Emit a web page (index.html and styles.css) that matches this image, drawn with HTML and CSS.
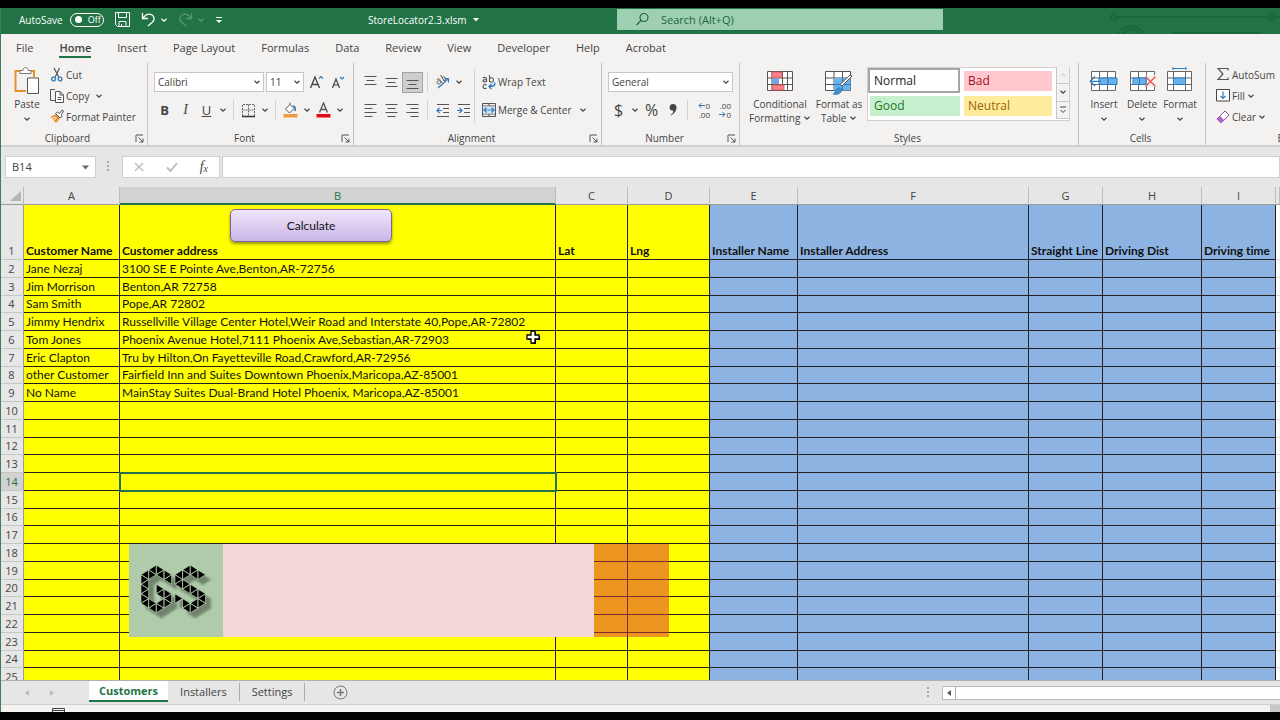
FILE: index.html
```html
<!DOCTYPE html>
<html lang="en">
<head>
<meta charset="utf-8">
<title>StoreLocator2.3.xlsm</title>
<link rel="stylesheet" href="styles.css">
</head>
<body>
<svg class="defs" aria-hidden="true">
  <symbol id="chev" viewBox="0 0 8 8"><path d="M1.5 2.8 4 5.2 6.500 2.800" fill="none" stroke="currentColor" stroke-width="1.200"/></symbol>
  <symbol id="launch" viewBox="0 0 9 9"><path d="M1 8V1h7M3.500 3.500 8 8M8 4.500V8H4.500" fill="none" stroke="#555" stroke-width="1"/></symbol>
</svg>
<div class="app">
  <header class="titlebar">
    <div class="quick">
      <span>AutoSave</span>
      <button class="toggle" aria-label="AutoSave off"><i></i>Off</button>
      <button class="qa" aria-label="Save"><svg width="15" height="15" viewBox="0 0 15 15" fill="none" stroke="#fff"><path d="M.5.5h14v14H2.500l-2-2zM3.500.5v5h8v-5M4 14.500v-5h7v5M6.500 12v2"/></svg></button>
      <button class="qa" aria-label="Undo"><svg width="15" height="15" viewBox="0 0 15 15" fill="none" stroke="#fff" stroke-width="1.300"><path d="M1.500 1v5.500H7M1.800 6.200C5 2 8.500 1.500 11 3c3 2 2.500 5 .5 7L7 14"/></svg></button>
      <svg class="chev" width="8" height="8"><use href="#chev"/></svg>
      <button class="qa faded" aria-label="Redo"><svg width="15" height="15" viewBox="0 0 15 15" fill="none" stroke="#fff" stroke-width="1.300"><path d="M13.500 1v5.500H8M13.200 6.200C10 2 6.500 1.500 4 3c-3 2-2.500 5-.5 7L8 14"/></svg></button>
      <svg class="chev faded" width="8" height="8"><use href="#chev"/></svg>
      <button class="qa more" aria-label="Customize toolbar"><svg width="8" height="8" viewBox="0 0 8 8"><path d="M1 1.500h6" stroke="#fff"/><path d="M1 4h6L4 7z" fill="#fff"/></svg></button>
    </div>
    <div class="file">StoreLocator2.3.xlsm <svg width="6" height="4" viewBox="0 0 6 4"><path d="M0 0h6L3 3.500z" fill="#fff"/></svg></div>
    <label class="search"><svg width="15" height="15" viewBox="0 0 15 15" fill="none" stroke="#1c6640" stroke-width="1.200"><circle cx="9" cy="5.500" r="4"/><path d="M6 8.500 1.500 13"/></svg><input type="search" placeholder="Search (Alt+Q)" aria-label="Search"></label>
    <svg class="decor" width="170" height="26" viewBox="0 0 170 26" fill="none" stroke="#1a5e38" stroke-width="2"><path d="M5 9h165M62 25h90"/><circle cx="4" cy="9" r="3"/><circle cx="161" cy="9" r="3"/><path d="M8 26c4-10 22-10 26 0M13 26c3-6 13-6 16 0"/></svg>
  </header>
  <nav class="tabs">
    <button>File</button><button class="on">Home</button><button>Insert</button><button>Page Layout</button><button>Formulas</button><button>Data</button><button>Review</button><button>View</button><button>Developer</button><button>Help</button><button>Acrobat</button>
  </nav>
  <div class="ribbon">
    <section class="group clipboard">
      <div class="body">
        <button class="big"><svg width="26" height="28" viewBox="0 0 26 28" fill="none"><path d="M6 4H1.500v20H12M16 4h4v6" stroke="#e8922e" stroke-width="2"/><path d="M6 6.500V3.500h3c0-4 5-4 5 0h3v3z" fill="#fff" stroke="#777"/><path d="M13.500 11h11v15.500h-11z" fill="#fff" stroke="#555"/></svg><span>Paste</span><svg class="chev" width="8" height="8"><use href="#chev"/></svg></button>
        <div class="list">
          <button><svg width="14" height="15" viewBox="0 0 14 15" fill="none"><path d="M4 1l5 9.500M9.500 1 5 10.500" stroke="#555" stroke-width="1.200"/><circle cx="3.500" cy="12" r="1.900" stroke="#2b7cc4" stroke-width="1.300"/><circle cx="10" cy="12" r="1.900" stroke="#2b7cc4" stroke-width="1.300"/></svg>Cut</button>
          <button><svg width="14" height="15" viewBox="0 0 14 15" fill="none" stroke="#555"><path d="M5 12.500H.5V1.500H5"/><path d="M5.500 3.500H10l3.500 3.500v7.500h-8zM10 3.500V7h3.500M7.500 9.500h4M7.500 11.500h4" fill="#fff"/></svg>Copy<svg class="chev" width="8" height="8"><use href="#chev"/></svg></button>
          <button><svg width="14" height="15" viewBox="0 0 14 15"><path d="M.5 8 6 5l4 4.500L6 14z" fill="#e8922e"/><path d="M2 9.500 5.500 8M3.500 11.500 6.500 9" stroke="#fff"/><path d="m5.500 4.500 2-1.500 2 1.500L12 1l1.500 1-2 3.500.5 2-2 1.500z" fill="#fff" stroke="#555"/></svg>Format Painter</button>
        </div>
      </div>
      <footer><span>Clipboard</span><svg width="9" height="9"><use href="#launch"/></svg></footer>
    </section>
    <section class="group font">
      <div class="body rows">
        <div class="row inset">
          <span class="combo face"><select aria-label="Font"><option>Calibri</option></select><svg width="8" height="8"><use href="#chev"/></svg></span>
          <span class="combo size"><select aria-label="Font size"><option>11</option></select><svg width="8" height="8"><use href="#chev"/></svg></span>
          <button class="tool" aria-label="Grow font"><svg width="16" height="15" viewBox="0 0 16 15" fill="none"><path d="M1.500 13 6 2l4.500 11M3 9.500h6" stroke="#444" stroke-width="1.300"/><path d="m10 3.500 2-2 2 2" stroke="#2b7cc4" stroke-width="1.200"/></svg></button>
          <button class="tool" aria-label="Shrink font"><svg width="16" height="15" viewBox="0 0 16 15" fill="none"><path d="M2.500 13 6 4l3.500 9M4 10h4" stroke="#444" stroke-width="1.200"/><path d="m10 2 2 2 2-2" stroke="#2b7cc4" stroke-width="1.200"/></svg></button>
        </div>
        <div class="row">
          <button class="tool"><b>B</b></button><button class="tool"><i class="it">I</i></button><button class="tool"><u>U</u></button><svg class="chev" width="12" height="8"><use href="#chev"/></svg><hr>
          <button class="tool" aria-label="Borders"><svg width="15" height="15" viewBox="0 0 15 15" fill="none" stroke="#666"><path d="M1.500 13V1.500h12V13M7.500 1.500v11M1.500 7h12" stroke-dasharray="2 1"/><path d="M1 13.500h13" stroke="#333" stroke-width="1.500"/></svg></button><svg class="chev" width="12" height="8"><use href="#chev"/></svg><hr>
          <button class="tool" aria-label="Fill color"><svg width="15" height="16" viewBox="0 0 15 16" fill="none"><path d="M2.500 7 7 2.500 11 6.500 6.500 11zM7 2.500V.5" stroke="#555" fill="#fff"/><path d="M10 4c2 0 2.500 2 2 5" stroke="#2b7cc4" stroke-width="1.600"/><path d="M.5 12h14v3.500H.5z" fill="#ed9a45"/></svg></button><svg class="chev" width="12" height="8"><use href="#chev"/></svg>
          <button class="tool" aria-label="Font color"><svg width="15" height="16" viewBox="0 0 15 16" fill="none"><path d="M3.500 10.500 7.500 1l4 9.500M5 7.500h5" stroke="#555" stroke-width="1.300"/><path d="M.5 12h14v3.500H.5z" fill="#e00b17"/></svg></button><svg class="chev" width="12" height="8"><use href="#chev"/></svg>
        </div>
      </div>
      <footer><span>Font</span><svg width="9" height="9"><use href="#launch"/></svg></footer>
    </section>
    <section class="group align">
      <div class="body">
        <div class="rows">
          <div class="row">
            <button class="tool" aria-label="Top align"><svg width="13" height="13" viewBox="0 0 13 13" stroke="#555"><path d="M.5 .5h12M2.500 4.500h8M.5 8.500h12"/></svg></button>
            <button class="tool" aria-label="Middle align"><svg width="13" height="13" viewBox="0 0 13 13" stroke="#555"><path d="M.5 2.500h12M2.500 6.500h8M.5 10.500h12"/></svg></button>
            <button class="tool on" aria-label="Bottom align"><svg width="13" height="13" viewBox="0 0 13 13" stroke="#555"><path d="M.5 4.500h12M2.500 8.500h8M.5 12.500h12"/></svg></button><hr>
            <button class="tool" aria-label="Orientation"><svg width="16" height="15" viewBox="0 0 16 15" fill="none"><path d="M3 13 13.500 3.500M9.500 3.500h4v4" stroke="#2b7cc4" stroke-width="1.200"/><path d="M2 5c1-2 3-1 3.500.5L7 8M5 6C3 5 1 7 2.500 8.500S6 8 5.500 6.500M5.500 0 9 5.500M7 3c1.500-2 4-1 3.500 1S8.500 6 8 5" stroke="#555"/></svg></button><svg class="chev" width="12" height="8"><use href="#chev"/></svg>
          </div>
          <div class="row">
            <button class="tool" aria-label="Align left"><svg width="13" height="13" viewBox="0 0 13 13" stroke="#555"><path d="M.5.5h12M.5 4.500h8M.5 8.500h12M.5 12.500h8"/></svg></button>
            <button class="tool" aria-label="Center"><svg width="13" height="13" viewBox="0 0 13 13" stroke="#555"><path d="M.5.5h12M2.500 4.500h8M.5 8.500h12M2.500 12.500h8"/></svg></button>
            <button class="tool" aria-label="Align right"><svg width="13" height="13" viewBox="0 0 13 13" stroke="#555"><path d="M.5.5h12M4.500 4.500h8M.5 8.500h12M4.500 12.500h8"/></svg></button><hr>
            <button class="tool" aria-label="Decrease indent"><svg width="13" height="13" viewBox="0 0 13 13" fill="none" stroke="#555"><path d="M1 .5h12M7 4.500h6M7 8.500h6M1 12.500h12"/><path d="M6 6.500H1M3.500 4 1 6.500 3.500 9" stroke="#2b7cc4" stroke-width="1.200"/></svg></button>
            <button class="tool" aria-label="Increase indent"><svg width="13" height="13" viewBox="0 0 13 13" fill="none" stroke="#555"><path d="M1 .5h12M7 4.500h6M7 8.500h6M1 12.500h12"/><path d="M0 6.500h5M2.500 4 5 6.500 2.500 9" stroke="#2b7cc4" stroke-width="1.200"/></svg></button>
          </div>
        </div>
        <hr class="tall">
        <div class="rows">
          <button class="text"><svg width="14" height="15" viewBox="0 0 14 15" fill="none" stroke="#555" stroke-width="1.100"><path d="M1 3c1-1 3.500-1 3.500 1v3M4.500 4.500C2 4.500 1 5 1 6s2.500 1.500 3.500 0M7.500 0v7M7.500 4c1-2 4-1.500 4 1s-3 3-4 1M4.500 10C2.500 8.500 1 10 1 11.500s1.500 3 3.500 1.500"/><path d="M12.500 7.500c1 3-1 4-5 4M9.500 9 7 11.500 9.500 14" stroke="#2b7cc4" stroke-width="1.400"/></svg>Wrap Text</button>
          <button class="text"><svg width="14" height="14" viewBox="0 0 14 14" fill="none"><path d="M.5.500h13v13H.5zM.5 3h13M.5 11h13M7 .5V3M7 11v2.500" stroke="#555"/><path d="M1 3.500h12v7H1z" fill="#d4e8f8"/><path d="M2 7h10M4.500 4.500 2 7l2.500 2.500M9.500 4.500 12 7 9.500 9.500" stroke="#2b7cc4" stroke-width="1.200"/></svg>Merge &amp; Center<svg class="chev" width="8" height="8"><use href="#chev"/></svg></button>
        </div>
      </div>
      <footer><span>Alignment</span><svg width="9" height="9"><use href="#launch"/></svg></footer>
    </section>
    <section class="group number">
      <div class="body rows">
        <div class="row inset"><span class="combo wide"><select aria-label="Number format"><option>General</option></select><svg width="8" height="8"><use href="#chev"/></svg></span></div>
        <div class="row">
          <button class="tool sym">$</button><svg class="chev" width="12" height="8"><use href="#chev"/></svg><button class="tool sym">%</button><button class="tool" aria-label="Comma style"><svg width="8" height="12" viewBox="0 0 8 12"><path d="M4 0c5 0 5 8-2 11.500L1.500 11C4 9.500 4.500 8 4 6.500-.5 7-.5 0 4 0z" fill="#444"/></svg></button><hr>
          <button class="tool dec" aria-label="Increase decimal"><span><svg width="7" height="7" viewBox="0 0 7 7" fill="none" stroke="#2b7cc4"><path d="M7 3.500H1M3.500 1 1 3.500 3.500 6"/></svg>0</span><span>.00</span></button>
          <button class="tool dec" aria-label="Decrease decimal"><span>.00</span><span><svg width="7" height="7" viewBox="0 0 7 7" fill="none" stroke="#2b7cc4"><path d="M0 3.500h6M3.500 1 6 3.500 3.500 6"/></svg>0</span></button>
        </div>
      </div>
      <footer><span>Number</span><svg width="9" height="9"><use href="#launch"/></svg></footer>
    </section>
    <section class="group styles">
      <div class="body">
        <button class="big cond"><svg width="26" height="28" viewBox="0 0 26 28"><path d="M.5 4.500h25v19H.5zM.5 11h25M.5 17.500h25M5 4.500v19M15.500 4.500v19M20.500 4.500v19" fill="#fff" stroke="#555"/><path d="M5 5h10v5.500H5zM5 18h12v5H5z" fill="#fb8188" stroke="#d8505a" stroke-width=".8"/><path d="M5 11.500h7v5.500H5z" fill="#6fa8e0"/></svg><span>Conditional<br>Formatting <svg class="chev" width="8" height="8"><use href="#chev"/></svg></span></button>
        <button class="big fmt"><svg width="28" height="28" viewBox="0 0 28 28"><path d="M.5 4.500h25v19H.5zM.5 11h25M.5 17.500h25M9 4.500v19M17.500 4.500v19" fill="#fff" stroke="#555"/><path d="M9 11h16.500v12.500H9z" fill="#69b2ea"/><path d="M9 17.500h16M17.500 11v12" stroke="#2b7cc4"/><path d="M27 9 17 19l-2-1.500L25 8z" fill="#fff" stroke="#555"/><path d="M8 27c2-1 2-3 3.500-5 2-2.500 6-1 5 2-1 3-5 4-8.500 3z" fill="#3b8fd6" stroke="#2b6ca8" stroke-width=".6"/></svg><span>Format as<br>Table <svg class="chev" width="8" height="8"><use href="#chev"/></svg></span></button>
        <div class="gallery">
          <button class="normal">Normal</button><button class="bad">Bad</button><button class="good">Good</button><button class="neutral">Neutral</button>
          <div class="scroll"><button class="dim" aria-label="Up"><svg width="8" height="8" viewBox="0 0 8 8"><path d="M1.500 5 4 2.800 6.500 5" fill="none" stroke="currentColor"/></svg></button><button aria-label="Down"><svg width="8" height="8"><use href="#chev"/></svg></button><button aria-label="More styles"><svg width="8" height="8" viewBox="0 0 8 8"><path d="M1 1h6M1.500 4 4 6.500 6.500 4" fill="none" stroke="currentColor"/></svg></button></div>
        </div>
      </div>
      <footer><span>Styles</span></footer>
    </section>
    <section class="group cells">
      <div class="body">
        <button class="big"><svg width="30" height="28" viewBox="0 0 30 28"><path d="M2.500 4.500h24v19h-24zM2.500 11h24M2.500 17.500h24M10.500 4.500v19M18.500 4.500v19" fill="#fff" stroke="#666"/><path d="M10 11h18v6.500H10z" fill="#69b2ea" stroke="#2b7cc4"/><path d="M19 11v6M12 14.300H1M6 9.500 1.200 14.300 6 19" stroke="#2b7cc4" stroke-width="1.200" fill="none"/></svg><span>Insert</span><svg class="chev" width="8" height="8"><use href="#chev"/></svg></button>
        <button class="big"><svg width="27" height="28" viewBox="0 0 27 28"><path d="M1.500 4.500h24v19h-24zM1.500 11h24M1.500 17.500h24M9.500 4.500v19M17.500 4.500v19" fill="#fff" stroke="#666"/><path d="M17.500 8h9v12h-9z" fill="#f3f2f1"/><path d="M4 11h13v6.500H4z" fill="#69b2ea" stroke="#2b7cc4"/><path d="M10.500 11v6" stroke="#2b7cc4"/><path d="m16.500 9.500 10 10M26.500 9.500l-10 10" stroke="#f0575c" stroke-width="1.500"/></svg><span>Delete</span><svg class="chev" width="8" height="8"><use href="#chev"/></svg></button>
        <button class="big"><svg width="26" height="28" viewBox="0 0 26 28"><path d="M.5 4.500h24v19H.5zM.5 11h24M.5 17.500h24M6.500 4.500v19M18.500 4.500v19" fill="#fff" stroke="#666"/><path d="M6.500 11h12v6.500h-12z" fill="#69b2ea" stroke="#2b7cc4"/><path d="M6 1.500h13M6 0v3M19 0v3" stroke="#2b7cc4"/></svg><span>Format</span><svg class="chev" width="8" height="8"><use href="#chev"/></svg></button>
      </div>
      <footer><span>Cells</span></footer>
    </section>
    <section class="group editing">
      <div class="body"><div class="list">
        <button><svg width="14" height="15" viewBox="0 0 14 15" fill="none" stroke="#555" stroke-width="1.200"><path d="M12 3.500V1.500H2l5 5.500-5 5.500h10v-2"/></svg>AutoSum</button>
        <button><svg width="14" height="13" viewBox="0 0 14 13" fill="none"><path d="M.5.5h13v11.500H.5z" fill="#fff" stroke="#444"/><path d="M7 2.500v7M4.500 7 7 9.500 9.500 7" stroke="#2b7cc4" stroke-width="1.200"/></svg>Fill<svg class="chev" width="8" height="8"><use href="#chev"/></svg></button>
        <button><svg width="14" height="14" viewBox="0 0 14 14"><path d="M1 9 9 1l4 4-8 8z" fill="#fff" stroke="#8b4fa8"/><path d="m1 9 3-3 4 4-3 3z" fill="#b565c9"/></svg>Clear<svg class="chev" width="8" height="8"><use href="#chev"/></svg></button>
      </div></div>
      <footer><span>Editing</span></footer>
    </section>
  </div>
  <div class="formulabar">
    <label class="namebox"><input value="B14" aria-label="Name box"><svg width="7" height="5" viewBox="0 0 7 5"><path d="M0 .5h7L3.500 4.500z" fill="#666"/></svg></label>
    <svg width="3" height="12" viewBox="0 0 3 12" fill="#aaa"><path d="M0 0h2v2H0zM0 4h2v2H0zM0 8h2v2H0z"/></svg>
    <div class="fx">
      <button aria-label="Cancel"><svg width="10" height="10" viewBox="0 0 10 10"><path d="m1 1 8 8M9 1 1 9" stroke="#bbb" stroke-width="1.300"/></svg></button>
      <button aria-label="Enter"><svg width="12" height="10" viewBox="0 0 12 10"><path d="m1 5.500 3.500 3.500L11 1" fill="none" stroke="#bbb" stroke-width="1.800"/></svg></button>
      <button class="fn" aria-label="Insert function">f<sub>x</sub></button>
    </div>
    <input class="formula" aria-label="Formula">
  </div>
  <main class="sheet">
    <table>
      <colgroup><col class="rh"><col class="a"><col class="b"><col class="c"><col class="d"><col class="e"><col class="f"><col class="g"><col class="h"><col class="i"><col></colgroup>
      <thead><tr><th class="corner"><svg width="11" height="10" viewBox="0 0 11 10"><path d="M11 0v10H0z" fill="#b5b5b5"/></svg></th><th>A</th><th class="sel">B</th><th>C</th><th>D</th><th>E</th><th>F</th><th>G</th><th>H</th><th>I</th><th></th></tr></thead>
      <tbody id="rows"></tbody>
    </table>
    <button class="calc">Calculate</button>
    <div class="banner">
      <div class="logo"><svg width="65" height="48" viewBox="0 0 68 50" aria-label="GS"><g stroke="#afcbaa" stroke-width=".7">
        <path transform="scale(8 5)" vector-effect="non-scaling-stroke" d="M0 2v2l1-1zM0 4v2l1-1zM0 6v2l1-1zM1 3v2l-1-1zM1 5v2l-1-1zM1 1v2l-1-1zM1 1v2l1-1zM2 0v2l-1-1zM2 0v2l1-1zM3 1v2l-1-1zM3 1v2l1-1zM4 2v2l-1-1zM1 7v2l-1-1zM1 7v2l1-1zM2 8v2l-1-1zM2 8v2l1-1zM3 7v2l-1-1zM3 7v2l1-1zM4 6v2l-1-1zM3 5v2l1-1zM3 5v2l-1-1zM2 4v2l1-1z"/>
        <path transform="translate(35.500 0) scale(8 5)" vector-effect="non-scaling-stroke" d="M3 1v2l1-1zM3 1v2l-1-1zM2 0v2l1-1zM2 0v2l-1-1zM1 1v2l1-1zM1 1v2l-1-1zM0 2v2l1-1zM1 3v2l-1-1zM1 3v2l1-1zM2 4v2l-1-1zM2 4v2l1-1zM3 5v2l-1-1zM3 5v2l1-1zM4 6v2l-1-1zM3 7v2l1-1zM3 7v2l-1-1zM2 8v2l1-1zM2 8v2l-1-1zM1 7v2l1-1zM0 6v2l1-1z"/>
      </g></svg></div>
      <div class="pink"></div><div class="orange"></div>
    </div>
    <svg class="cursor" width="15" height="15" viewBox="0 0 15 15"><path d="M6 2h4v4h4v4h-4v4H6v-4H2V6h4z" fill="#000"/><path d="M5 1h4v4h4v4H9v4H5V9H1V5h4z" fill="#fff" stroke="#000" stroke-width="1.300"/></svg>
  </main>
  <div class="sheetbar">
    <button class="nav" aria-label="Previous sheet"><svg width="4" height="6" viewBox="0 0 4 6"><path d="M4 0v6L0 3z" fill="#bbb"/></svg></button><button class="nav" aria-label="Next sheet"><svg width="4" height="6" viewBox="0 0 4 6"><path d="M0 0v6l4-3z" fill="#bbb"/></svg></button>
    <div class="sheets"><button class="on">Customers</button><button>Installers</button><button>Settings</button></div>
    <button class="add" aria-label="New sheet"><svg width="15" height="15" viewBox="0 0 15 15" fill="none" stroke="#777"><circle cx="7.500" cy="7.500" r="6.500"/><path d="M7.500 4v7M4 7.500h7" stroke-width="1.500"/></svg></button>
    <svg class="grip" width="3" height="12" viewBox="0 0 3 12" fill="#aaa"><path d="M0 0h2v2H0zM0 4h2v2H0zM0 8h2v2H0z"/></svg>
    <div class="hscroll"><button aria-label="Scroll left"><svg width="4" height="6" viewBox="0 0 4 6"><path d="M4 0v6L0 3z" fill="#555"/></svg></button></div>
  </div>
  <div class="status"><svg width="13" height="4" viewBox="0 0 13 4"><path d="M.5 4V.5h12V4M1 2.500h11" fill="none" stroke="#444"/></svg><span></span></div>
</div>
<script src="rows.js"></script>
</body>
</html>
```
FILE: rows.js
```js
const head = ["Customer Name", "Customer address", "Lat", "Lng", "Installer Name", "Installer Address", "Straight Line", "Driving Dist", "Driving time"];
const customers = [
  ["Jane Nezaj", "3100 SE E Pointe Ave,Benton,AR-72756"],
  ["Jim Morrison", "Benton,AR 72758"],
  ["Sam Smith", "Pope,AR 72802"],
  ["Jimmy Hendrix", "Russellville Village Center Hotel,Weir Road and Interstate 40,Pope,AR-72802"],
  ["Tom Jones", "Phoenix Avenue Hotel,7111 Phoenix Ave,Sebastian,AR-72903"],
  ["Eric Clapton", "Tru by Hilton,On Fayetteville Road,Crawford,AR-72956"],
  ["other Customer", "Fairfield Inn and Suites Downtown Phoenix,Maricopa,AZ-85001"],
  ["No Name", "MainStay Suites Dual-Brand Hotel Phoenix, Maricopa,AZ-85001"]
];
const body = document.getElementById("rows");
for (let n = 1; n <= 25; n++) {
  const data = n === 1 ? head : customers[n - 2] || [];
  const tr = body.insertRow();
  const th = document.createElement("th");
  th.textContent = n;
  tr.append(th);
  if (n === 14) th.className = "sel";
  for (let c = 0; c < 10; c++) {
    const td = tr.insertCell();
    td.textContent = data[c] || "";
    td.className = c < 4 ? "cust" : c < 9 ? "inst" : "";
    if (n === 14 && c === 1) td.classList.add("active");
  }
}
```
FILE: styles.css
```css
* { box-sizing: border-box; }
body { margin: 0; background: #000; font: 10px/16px "Open Sans", "Noto Sans", sans-serif; color: #444; }
button, input, select { font: inherit; color: inherit; border: 0; padding: 0; margin: 0; background: none; border-radius: 0; }
svg { flex: none; display: block; }
.defs { position: absolute; width: 0; height: 0; }
.app { height: 100vh; border: solid #000; border-width: 8px 0; display: flex; flex-direction: column; overflow: hidden; background: #e6e6e6; position: relative; }
.app::after { content: ""; position: absolute; left: 0; top: 0; bottom: 0; width: 1px; background: #3f7d5b; }
.app > * { flex: none; }

.titlebar { height: 26px; background: #217346; color: #fff; display: flex; align-items: center; position: relative; padding-bottom: 3px; }
.quick { display: flex; align-items: center; padding-left: 19px; width: 368px; }
.toggle { width: 34px; height: 14px; border: 1px solid #fff; border-radius: 7px; margin: 0 11px 0 7px; display: flex; align-items: center; gap: 6px; padding-left: 4px; font-size: 9px; line-height: 12px; }
.toggle i { width: 7px; height: 7px; border-radius: 50%; background: #fff; }
.qa { margin-right: 11px; }
.qa + .chev { margin: 0 10px 0 -7px; }
.faded { opacity: .25; }
.more { margin-left: 0; }
.file { display: flex; align-items: center; gap: 6px; width: 249px; }
.search { width: 326px; height: 21px; background: #9fcfb2; display: flex; align-items: center; padding-left: 18px; gap: 11px; font-size: 11px; }
.search input { width: 200px; color: #1c6640; outline: 0; }
.search input::placeholder { color: #1c6640; opacity: 1; }
.decor { position: absolute; right: 0; top: 0; opacity: .6; }

.tabs { height: 27px; background: #f3f2f1; display: flex; padding-left: 16px; gap: 26px; font-size: 11px; align-items: flex-start; }
.tabs button { height: 24px; border-bottom: 2px solid transparent; padding-top: 5px; }
.tabs .on { font-weight: 600; border-color: #217346; }

.ribbon { background: #f3f2f1; display: flex; height: 86px; border-bottom: 2px solid #d2d0ce; overflow: hidden; padding-top: 2px; }
.group { border-right: 1px solid #c6c4c2; display: flex; flex-direction: column; height: 82px; flex: none; }
.group .body { display: flex; height: 66px; flex: none; }
.group footer { display: flex; align-items: center; height: 18px; padding-right: 3px; flex: none; }
.group footer span { flex: 1; text-align: center; }
.clipboard { width: 148px; }
.font { width: 206px; }
.align { width: 248px; }
.number { width: 138px; }
.styles { flex: 1 0 339px; }
.cells { width: 127px; }
.editing { width: 178px; margin-right: -104px; border: 0; }
.big { display: flex; flex-direction: column; align-items: center; width: 38px; line-height: 14px; padding-top: 4px; }
.big span { padding-top: 2px; white-space: nowrap; }
.big > .chev { margin-top: 4px; }
.big span .chev { display: inline-block; }
.clipboard .body { padding-left: 8px; }
.list { display: flex; flex-direction: column; padding: 1px 0 0 4px; }
.list button { height: 21px; display: flex; align-items: center; gap: 2px; white-space: nowrap; }
.list .chev { margin-left: 4px; }
.rows { flex-direction: column; padding-top: 5px; }
.font .rows, .align .body, .number .rows, .font .body, .number .body { padding-left: 6px; }
.align .rows { display: flex; padding-left: 0; }
.row { display: flex; height: 28px; align-items: center; }
.row .tool { flex: none; width: 21px; height: 21px; display: flex; align-items: center; justify-content: center; font-size: 13px; }
.row .tool.on { background: #d0cecc; border: 1px solid #a5a3a1; }
.row .tool.sym { font-size: 16px; }
.row .tool.dec { flex-direction: column; font-size: 8px; line-height: 9px; align-items: flex-end; padding-right: 3px; }
.dec span { display: flex; align-items: center; }
.it { font-family: "Liberation Serif", serif; font-size: 14px; }
hr { flex: none; width: 1px; height: 20px; border: 0; background: #d5d3d1; margin: 0 4px; }
hr.tall { height: 54px; margin: 6px 7px 0 0; }
.text { height: 28px; display: flex; align-items: center; gap: 2px; white-space: nowrap; }
.text .chev { margin-left: 5px; }
.combo { display: grid; align-items: center; height: 20px; background: #fff; border: 1px solid #c8c6c4; margin-right: 2px; }
.combo > * { grid-area: 1 / 1; }
.combo svg { justify-self: end; margin-right: 2px; pointer-events: none; }
.combo select { appearance: none; padding-left: 3px; width: 100%; }
.face { width: 110px; }
.size { width: 38px; }
.wide { width: 125px; }
.styles .body { padding-left: 9px; }
.cond { width: 62px; }
.fmt { width: 56px; }
.gallery { display: grid; grid-template: 25px 25px / 92px 1fr 13px; column-gap: 4px; width: 203px; height: 54px; margin-top: 4px; border: 1px solid #d2d0ce; background: #fff; font-size: 12px; align-items: center; }
.gallery > button { text-align: left; padding-left: 4px; height: 20px; }
.gallery .normal { border: 2px solid #a6a6a6; height: 25px; color: #222; }
.bad { background: #ffc7ce; color: #a01020; }
.good { background: #c6efce; color: #1b7a1b; margin-left: 2px; }
.neutral { background: #ffeb9c; color: #9c6500; }
.scroll { grid-area: 1 / 3 / 3 / 4; display: grid; height: 52px; border-left: 1px solid #c8c6c4; background: #f3f2f1; }
.scroll button { display: grid; place-items: center; border-bottom: 1px solid #c8c6c4; }
.dim { color: #bbb; }
.cells .body { padding-left: 6px; }
.editing .list { padding-left: 10px; }
.editing .chev { margin-left: 0; }

.formulabar { height: 40px; display: flex; align-items: center; padding-left: 5px; }
.namebox { width: 91px; height: 22px; background: #fff; border: 1px solid #d0d0d0; display: flex; align-items: center; margin-right: 11px; padding: 0 6px; font-size: 11px; }
.namebox input { flex: 1; min-width: 0; }
.fx { width: 98px; height: 22px; margin-left: 12px; background: #fff; border: 1px solid #d0d0d0; display: flex; justify-content: space-around; align-items: center; }
.fn { font: italic 14px/16px "Liberation Serif", serif; }
.fn sub { font-size: 10px; line-height: 0; vertical-align: -1px; }
.formula { flex: 1; height: 22px; background: #fff; border: 1px solid #d0d0d0; margin-left: 2px; }

.sheet { flex: 1 1 0; min-height: 0; overflow: hidden; position: relative; background: #fff; }
table { table-layout: fixed; width: 100%; border-collapse: separate; border-spacing: 0; }
.rh { width: 24px; }
.a { width: 96px; }
.b { width: 436px; }
.c { width: 72px; }
.d { width: 82px; }
.e { width: 88px; }
.f { width: 231px; }
.g { width: 74px; }
.h { width: 99px; }
.i { width: 74px; }
th, td { padding: 0; overflow: hidden; white-space: nowrap; }
th { font-size: 11px; font-weight: 400; background: #e6e6e6; }
thead th { height: 18px; border-right: 1px solid #bdbdbd; border-bottom: 1px solid #9c9c9c; line-height: 16px; }
thead .sel { background: #d2d2d2; color: #217346; border-bottom: 2px solid #217346; line-height: 15px; }
.corner svg { margin-left: 10px; }
tbody th { border-right: 1px solid #9c9c9c; border-bottom: 1px solid #c6c6c6; line-height: 16px; }
tbody .sel { background: #d2d2d2; color: #217346; }
tbody tr { height: 18px; }
tbody tr:nth-child(4n) { height: 17px; }
tbody tr:first-child { height: 55px; vertical-align: bottom; }
td { font: 12px/16px Lato, "Open Sans", sans-serif; font-variant-ligatures: none; color: #111; padding-left: 2px; border-bottom: 1px solid #dadada; }
tr:first-child td { font-weight: 700; }
.cust, .inst { border-right: 1px solid #222; border-bottom: 1px solid #222; }
.cust { background: #ff0; }
.inst { background: #8db3e2; }
.active { outline: 2px solid #217346; outline-offset: -1px; }
.calc { position: absolute; left: 230px; top: 22px; width: 162px; height: 33px; border: 1px solid #7d60a0; border-radius: 5px; background: linear-gradient(#efe6f9, #c9b5e8); box-shadow: 0 2px 3px rgba(0,0,0,.4); color: #111; font: 12px/16px Lato, sans-serif; }
.banner { position: absolute; left: 129px; top: 357px; width: 540px; height: 93px; display: flex; }
.logo { width: 94px; background: #afcbaa; padding: 21px 0 0 12px; }
.logo svg { overflow: visible; filter: drop-shadow(5px 5px 1px rgba(0,0,0,.35)); }
.pink { flex: 1; background: #f4d8d8; }
.orange { width: 75px; background: rgba(217,45,62,.5); }
.cursor { position: absolute; left: 526px; top: 143px; }

.sheetbar { height: 24px; border-top: 1px solid #b0b0b0; display: flex; align-items: center; background: #e6e6e6; }
.nav { margin-left: 25px; width: 4px; }
.nav + .nav { margin-left: 21px; }
.sheets { display: flex; height: 23px; padding-bottom: 2px; margin-left: 35px; font-size: 11px; align-items: center; }
.sheets button { border-right: 1px solid #aaa; height: 18px; padding: 0 12px; }
.sheets .on { height: 21px; background: #fff; color: #217346; font-weight: 700; border-right: 0; border-bottom: 2px solid #217346; padding: 0 10px; }
.add { margin-left: 28px; }
.grip { margin-left: auto; }
.hscroll { width: 338px; height: 14px; margin-left: 12px; border: 1px solid #bbb; border-right: 0; background: #fff; }
.hscroll button { width: 13px; height: 12px; border-right: 1px solid #aaa; display: grid; place-items: center; }
.status { height: 8px; background: #f3f2f1; border-top: 1px solid #d0d0d0; display: flex; justify-content: space-between; align-items: flex-end; padding-left: 52px; }
.status span { width: 10px; height: 7px; background: #c8c8c8; }
```
